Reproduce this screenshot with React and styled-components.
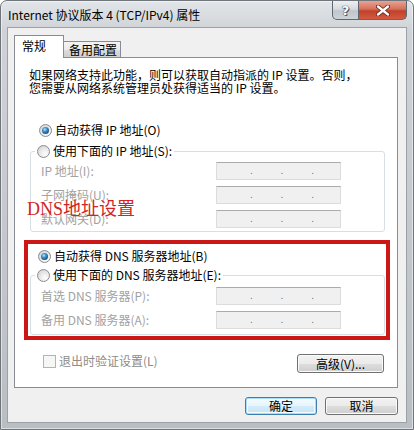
import React from "react";
import styled, { createGlobalStyle, css } from "styled-components";

const GlobalStyle = createGlobalStyle`
  html, body { margin: 0; padding: 0; background: #fff; }
  body { font-family: "Noto Sans CJK SC", "Noto Sans", sans-serif; }
`;

const Window = styled.div`
  width: 414px;
  height: 430px;
  box-sizing: border-box;
  display: flex;
  flex-direction: column;
  padding: 0 6px 6px;
  border: 1px solid #6f757b;
  border-radius: 7px 7px 0 0;
  background: linear-gradient(180deg, #e2e5e8 0%, #cfd3d7 30px, #c3c7cc 60%, #b9bec3 100%);
  box-shadow: inset 0 0 0 1px rgba(255, 255, 255, 0.5);
`;

const TitleBar = styled.div`
  display: flex;
  justify-content: space-between;
  align-items: flex-start;
  height: 26px;
`;

const Title = styled.div`
  padding: 6px 0 0 1px;
  font-size: 12px;
  line-height: 16px;
  color: #000;
`;

const Controls = styled.div`
  display: flex;
`;

const CaptionButton = styled.div`
  height: 19px;
  box-sizing: border-box;
  display: flex;
  align-items: center;
  justify-content: center;
  border: 1px solid #5f6870;
  border-top: none;
  ${(p) =>
    p.$close
      ? css`
          width: 48px;
          border-left: none;
          border-radius: 0 0 5px 0;
          background: linear-gradient(180deg, #e8a493 0%, #d5705b 45%, #c2412a 55%, #d35a40 100%);
        `
      : css`
          width: 27px;
          border-radius: 0 0 0 5px;
          background: linear-gradient(180deg, #eef0f2 0%, #d6dadf 45%, #c0c6cc 55%, #cdd2d7 100%);
        `}
`;

const HelpGlyph = styled.span`
  font-family: "DejaVu Sans", sans-serif;
  font-weight: bold;
  font-size: 13px;
  line-height: 13px;
  color: #fff;
  text-shadow: 0 0 1px #3b4550, 0 0 1px #3b4550, 1px 1px 0 #56606a;
`;

const Client = styled.div`
  flex: 1;
  display: flex;
  flex-direction: column;
  background: #f0f0f0;
  border: 1px solid #9aa1a8;
  padding: 7px 8px 7px 6px;
`;

const TabRow = styled.div`
  display: flex;
  align-items: flex-end;
  height: 22px;
`;

const Tab = styled.div`
  box-sizing: border-box;
  font-size: 12px;
  color: #000;
  border: 1px solid #898c95;
  border-bottom: none;
  ${(p) =>
    p.$active
      ? css`
          width: 50px;
          height: 23px;
          margin-bottom: -1px;
          padding: 2px 0 0 7px;
          line-height: 16px;
          background: #fff;
          position: relative;
          z-index: 1;
        `
      : css`
          width: 57px;
          height: 16px;
          border-left: none;
          padding: 0 0 0 5px;
          line-height: 15px;
          background: linear-gradient(180deg, #f3f3f3 0%, #ebebeb 50%, #dddddd 51%, #cfcfcf 100%);
        `}
`;

const Panel = styled.div`
  position: relative;
  box-sizing: border-box;
  height: 331px;
  display: flex;
  flex-direction: column;
  border: 1px solid #898c95;
  background: #fff;
`;

const Description = styled.p`
  margin: 10px 0 0 14px;
  font-size: 12px;
  line-height: 13px;
  color: #000;
`;

const RadioRow = styled.label`
  display: flex;
  align-items: center;
  gap: 3px;
  height: 16px;
  font-size: 12px;
  line-height: 16px;
  color: #000;
  margin: ${(p) => p.$margin || "0"};
`;

const RadioDot = styled.span`
  position: relative;
  width: 13px;
  height: 13px;
  box-sizing: border-box;
  border-radius: 50%;
  border: 1px solid #8a8d90;
  background: radial-gradient(circle at 65% 70%, #ffffff 0%, #e9e9e9 45%, #c9cbcd 100%);
  ${(p) =>
    p.$checked &&
    css`
      &::after {
        content: "";
        position: absolute;
        left: 2px;
        top: 2px;
        width: 7px;
        height: 7px;
        border-radius: 50%;
        background: radial-gradient(circle at 40% 35%, #bfe3f8 0%, #3d8fc8 35%, #174f80 75%, #0c3559 100%);
      }
    `}
`;

const GroupBox = styled.fieldset`
  margin: ${(p) => p.$margin || "0"};
  padding: 0;
  min-width: 0;
  border: 1px solid #d5dfe5;
  border-radius: 3px;
`;

const Legend = styled.legend`
  margin-left: 4px;
  padding: 0 2px;
`;

const FieldGrid = styled.div`
  display: grid;
  grid-template-columns: 175px 125px;
  grid-auto-rows: 18px;
  row-gap: 6px;
  align-items: center;
  padding: ${(p) => p.$padding};
`;

const FieldLabel = styled.span`
  font-size: 12px;
  line-height: 14px;
  color: #a2a2a2;
`;

const AddressBox = styled.div`
  box-sizing: border-box;
  width: 125px;
  height: 18px;
  display: flex;
  justify-content: space-between;
  align-items: flex-end;
  padding: 0 26px 3px 33px;
  background: #f0f0f0;
  border: 1px solid #dcdcdc;
  border-top-color: #ababab;
  font-family: "DejaVu Sans", sans-serif;
  font-size: 9px;
  line-height: 9px;
  color: #6d6d6d;
`;

const Annotation = styled.div`
  position: absolute;
  left: 12px;
  top: 141px;
  font-family: "Liberation Serif", "Noto Sans CJK SC", serif;
  font-size: 18px;
  line-height: 21px;
  color: #d22424;
  pointer-events: none;
`;

const DnsSection = styled.div`
  position: relative;
  margin: 16px 12px 0 15px;

  &::after {
    content: "";
    position: absolute;
    top: -8px;
    left: -6px;
    right: -5px;
    bottom: -5px;
    border: 4px solid #cc1717;
    pointer-events: none;
  }
`;

const BottomRow = styled.div`
  display: flex;
  justify-content: space-between;
  align-items: flex-start;
  margin: 19px 13px 0 28px;
`;

const CheckLabel = styled.label`
  display: flex;
  align-items: center;
  gap: 3px;
  margin-top: 0;
  height: 14px;
  font-size: 12px;
  line-height: 14px;
  color: #8c8c8c;
`;

const CheckBox = styled.span`
  width: 13px;
  height: 13px;
  box-sizing: border-box;
  border: 1px solid #b4b4b4;
  background: #f6f6f6;
`;

const Button = styled.button`
  box-sizing: border-box;
  width: ${(p) => p.$width}px;
  height: ${(p) => p.$height || 19}px;
  padding: 0;
  font-family: "Noto Sans CJK SC", "Noto Sans", sans-serif;
  font-size: 12px;
  line-height: 14px;
  color: #000;
  border-radius: 3px;
  border: 1px solid #707070;
  background: linear-gradient(180deg, #f2f2f2 0%, #ebebeb 50%, #dddddd 51%, #cfcfcf 100%);
  box-shadow: inset 0 0 0 1px #fbfbfb;
  ${(p) =>
    p.$default &&
    css`
      border-color: #3c7fb1;
      background: linear-gradient(180deg, #f4fbff 0%, #e6f4fc 50%, #d4ecfa 51%, #c4e3f6 100%);
      box-shadow: inset 0 0 0 1px #a8dcf8, inset 0 0 0 2px #f4fbff;
    `}
`;

const Footer = styled.div`
  display: flex;
  justify-content: flex-end;
  gap: 8px;
  margin-top: 9px;
`;

const Radio = ({ checked, children, margin }) => (
  <RadioRow $margin={margin}>
    <RadioDot $checked={checked} />
    <span>{children}</span>
  </RadioRow>
);

const Address = () => (
  <AddressBox>
    <span>.</span>
    <span>.</span>
    <span>.</span>
  </AddressBox>
);

const CloseGlyph = () => (
  <svg width="14" height="11" viewBox="0 0 14 11">
    <path d="M2 1.5 L12 9.5 M12 1.5 L2 9.5" stroke="#5a2218" strokeWidth="4" strokeLinecap="round" />
    <path d="M2 1.5 L12 9.5 M12 1.5 L2 9.5" stroke="#fff" strokeWidth="2.4" strokeLinecap="round" />
  </svg>
);

const ipRows = ["IP 地址(I):", "子网掩码(U):", "默认网关(D):"];
const dnsRows = ["首选 DNS 服务器(P):", "备用 DNS 服务器(A):"];

export default function App() {
  return (
    <>
      <GlobalStyle />
      <Window>
        <TitleBar>
          <Title>Internet 协议版本 4 (TCP/IPv4) 属性</Title>
          <Controls>
            <CaptionButton>
              <HelpGlyph>?</HelpGlyph>
            </CaptionButton>
            <CaptionButton $close>
              <CloseGlyph />
            </CaptionButton>
          </Controls>
        </TitleBar>
        <Client>
          <TabRow>
            <Tab $active>常规</Tab>
            <Tab>备用配置</Tab>
          </TabRow>
          <Panel>
            <Description>
              如果网络支持此功能，则可以获取自动指派的 IP 设置。否则，
              <br />
              您需要从网络系统管理员处获得适当的 IP 设置。
            </Description>
            <Radio checked margin="28px 0 0 24px">自动获得 IP 地址(O)</Radio>
            <GroupBox $margin="5px 12px 0 15px">
              <Legend>
                <Radio>使用下面的 IP 地址(S):</Radio>
              </Legend>
              <FieldGrid $padding="3px 0 3px 10px">
                {ipRows.map((label) => (
                  <React.Fragment key={label}>
                    <FieldLabel>{label}</FieldLabel>
                    <Address />
                  </React.Fragment>
                ))}
              </FieldGrid>
            </GroupBox>
            <DnsSection>
              <Radio checked margin="0 0 0 8px">自动获得 DNS 服务器地址(B)</Radio>
              <GroupBox $margin="3px 0 0 0">
                <Legend>
                  <Radio>使用下面的 DNS 服务器地址(E):</Radio>
                </Legend>
                <FieldGrid $padding="4px 0 5px 10px">
                  {dnsRows.map((label) => (
                    <React.Fragment key={label}>
                      <FieldLabel>{label}</FieldLabel>
                      <Address />
                    </React.Fragment>
                  ))}
                </FieldGrid>
              </GroupBox>
            </DnsSection>
            <BottomRow>
              <CheckLabel>
                <CheckBox />
                <span>退出时验证设置(L)</span>
              </CheckLabel>
              <Button $width={87}>高级(V)...</Button>
            </BottomRow>
            <Annotation>DNS地址设置</Annotation>
          </Panel>
          <Footer>
            <Button $width={72} $height={18} $default>确定</Button>
            <Button $width={73} $height={18}>取消</Button>
          </Footer>
        </Client>
      </Window>
    </>
  );
}
